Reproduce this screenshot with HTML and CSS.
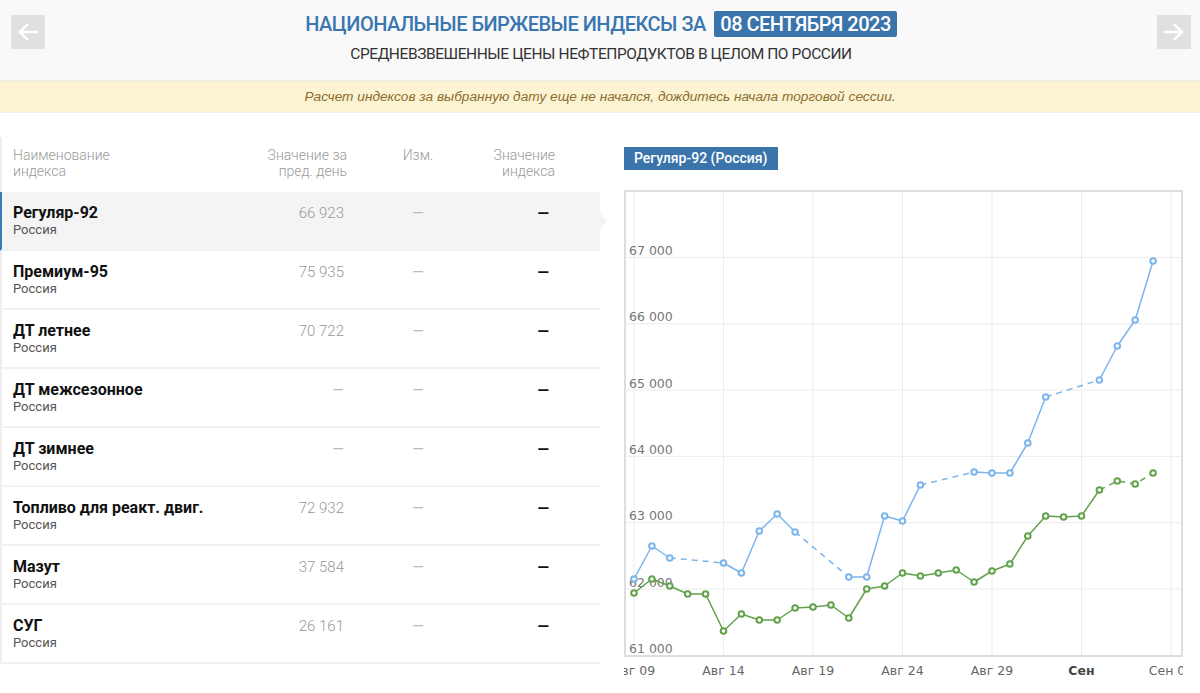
FILE: index.html
```html
<!DOCTYPE html>
<html lang="ru">
<head>
<meta charset="utf-8">
<title>Национальные биржевые индексы</title>
<link rel="stylesheet" href="styles.css">
</head>
<body>
<header class="top">
  <button class="nav" aria-label="Назад">
    <svg width="34" height="34" viewBox="0 0 34 34"><path d="M26 17H9M16 10l-7 7 7 7" fill="none" stroke="#fff" stroke-width="2.4" stroke-linecap="square"/></svg>
  </button>
  <div class="titles">
    <h1 class="title">Национальные биржевые индексы за <span class="date">08 сентября 2023</span></h1>
    <p class="subtitle">Средневзвешенные цены нефтепродуктов в целом по России</p>
  </div>
  <button class="nav" aria-label="Вперёд">
    <svg width="34" height="34" viewBox="0 0 34 34"><path d="M8 17h17M18 10l7 7-7 7" fill="none" stroke="#fff" stroke-width="2.4" stroke-linecap="square"/></svg>
  </button>
</header>
<div class="notice">Расчет индексов за выбранную дату еще не начался, дождитесь начала торговой сессии.</div>
<main class="content">
  <section class="indices">
    <div class="thead">
      <div>Наименование<br>индекса</div>
      <div class="r">Значение за<br>пред. день</div>
      <div class="c">Изм.</div>
      <div class="r">Значение<br>индекса</div>
    </div>
    <div class="row active">
      <div><div class="name">Регуляр-92</div><div class="region">Россия</div></div>
      <div class="prev">66 923</div><div class="chg">—</div><div class="val">—</div>
    </div>
    <div class="row">
      <div><div class="name">Премиум-95</div><div class="region">Россия</div></div>
      <div class="prev">75 935</div><div class="chg">—</div><div class="val">—</div>
    </div>
    <div class="row">
      <div><div class="name">ДТ летнее</div><div class="region">Россия</div></div>
      <div class="prev">70 722</div><div class="chg">—</div><div class="val">—</div>
    </div>
    <div class="row">
      <div><div class="name">ДТ межсезонное</div><div class="region">Россия</div></div>
      <div class="prev dash">—</div><div class="chg">—</div><div class="val">—</div>
    </div>
    <div class="row">
      <div><div class="name">ДТ зимнее</div><div class="region">Россия</div></div>
      <div class="prev dash">—</div><div class="chg">—</div><div class="val">—</div>
    </div>
    <div class="row">
      <div><div class="name">Топливо для реакт. двиг.</div><div class="region">Россия</div></div>
      <div class="prev">72 932</div><div class="chg">—</div><div class="val">—</div>
    </div>
    <div class="row">
      <div><div class="name">Мазут</div><div class="region">Россия</div></div>
      <div class="prev">37 584</div><div class="chg">—</div><div class="val">—</div>
    </div>
    <div class="row">
      <div><div class="name">СУГ</div><div class="region">Россия</div></div>
      <div class="prev">26 161</div><div class="chg">—</div><div class="val">—</div>
    </div>
  </section>
  <section class="chart-panel">
    <div class="series-tag">Регуляр-92 (Россия)</div>
    <svg class="chart" width="559" height="503" viewBox="0 0 559 503">
      <g class="grid">
        <path d="M10 2V465M99.5 2V465M189 2V465M278.5 2V465M368 2V465M457.5 2V465M547 2V465"/>
        <path d="M2 67.5H557M2 133.8H557M2 200.1H557M2 266.4H557M2 332.7H557M2 399H557"/>
      </g>
      <rect class="frame" x="1" y="1" width="557" height="465"/>
      <g class="ylab">
        <text x="5" y="65">67 000</text>
        <text x="5" y="131.3">66 000</text>
        <text x="5" y="197.6">65 000</text>
        <text x="5" y="263.9">64 000</text>
        <text x="5" y="330.2">63 000</text>
        <text x="5" y="396.5">62 000</text>
        <text x="5" y="462.8">61 000</text>
      </g>
      <g class="xlab">
        <text x="10" y="485">Авг 09</text>
        <text x="99.5" y="485">Авг 14</text>
        <text x="189" y="485">Авг 19</text>
        <text x="278.5" y="485">Авг 24</text>
        <text x="368" y="485">Авг 29</text>
        <text x="457.5" y="485" class="month">Сен</text>
        <text x="547" y="485">Сен 08</text>
      </g>
      <g class="s-green">
        <path class="line" d="M10 403L27.9 389L45.8 396L63.7 404L81.6 404L99.5 441L117.4 424L135.3 430L153.2 430L171.1 418L189 417L206.9 415L224.8 428L242.7 399L260.6 396L278.5 383L296.4 386L314.3 383L332.2 380L350.1 392L368 381L385.9 374L403.8 346L421.7 326L439.6 327L457.5 326L475.4 300"/>
        <path class="line dashed" d="M475.4 300L493.3 291L511.2 294L529.1 283"/>
        <circle cx="10" cy="403" r="2.8"/><circle cx="27.9" cy="389" r="2.8"/><circle cx="45.8" cy="396" r="2.8"/><circle cx="63.7" cy="404" r="2.8"/><circle cx="81.6" cy="404" r="2.8"/><circle cx="99.5" cy="441" r="2.8"/><circle cx="117.4" cy="424" r="2.8"/><circle cx="135.3" cy="430" r="2.8"/><circle cx="153.2" cy="430" r="2.8"/><circle cx="171.1" cy="418" r="2.8"/><circle cx="189" cy="417" r="2.8"/><circle cx="206.9" cy="415" r="2.8"/><circle cx="224.8" cy="428" r="2.8"/><circle cx="242.7" cy="399" r="2.8"/><circle cx="260.6" cy="396" r="2.8"/><circle cx="278.5" cy="383" r="2.8"/><circle cx="296.4" cy="386" r="2.8"/><circle cx="314.3" cy="383" r="2.8"/><circle cx="332.2" cy="380" r="2.8"/><circle cx="350.1" cy="392" r="2.8"/><circle cx="368" cy="381" r="2.8"/><circle cx="385.9" cy="374" r="2.8"/><circle cx="403.8" cy="346" r="2.8"/><circle cx="421.7" cy="326" r="2.8"/><circle cx="439.6" cy="327" r="2.8"/><circle cx="457.5" cy="326" r="2.8"/><circle cx="475.4" cy="300" r="2.8"/><circle cx="493.3" cy="291" r="2.8"/><circle cx="511.2" cy="294" r="2.8"/><circle cx="529.1" cy="283" r="2.8"/>
      </g>
      <g class="s-blue">
        <path class="line" d="M10 389L27.9 356L45.8 368M99.5 373L117.4 383L135.3 341L153.2 324L171.1 342M224.8 387L242.7 387L260.6 326L278.5 331L296.4 295M350.1 282L368 283L385.9 283L403.8 253L421.7 207M475.4 190L493.3 156L511.2 130L529.1 71"/>
        <path class="line dashed" d="M45.8 368L99.5 373M171.1 342L224.8 387M296.4 295L350.1 282M421.7 207L475.4 190"/>
        <circle cx="10" cy="389" r="2.8"/><circle cx="27.9" cy="356" r="2.8"/><circle cx="45.8" cy="368" r="2.8"/><circle cx="99.5" cy="373" r="2.8"/><circle cx="117.4" cy="383" r="2.8"/><circle cx="135.3" cy="341" r="2.8"/><circle cx="153.2" cy="324" r="2.8"/><circle cx="171.1" cy="342" r="2.8"/><circle cx="224.8" cy="387" r="2.8"/><circle cx="242.7" cy="387" r="2.8"/><circle cx="260.6" cy="326" r="2.8"/><circle cx="278.5" cy="331" r="2.8"/><circle cx="296.4" cy="295" r="2.8"/><circle cx="350.1" cy="282" r="2.8"/><circle cx="368" cy="283" r="2.8"/><circle cx="385.9" cy="283" r="2.8"/><circle cx="403.8" cy="253" r="2.8"/><circle cx="421.7" cy="207" r="2.8"/><circle cx="475.4" cy="190" r="2.8"/><circle cx="493.3" cy="156" r="2.8"/><circle cx="511.2" cy="130" r="2.8"/><circle cx="529.1" cy="71" r="2.8"/>
      </g>
    </svg>
  </section>
</main>
</body>
</html>
```
FILE: styles.css
```css
* { box-sizing: border-box; }
body {
  margin: 0;
  background: #fff;
  font-family: Roboto, "Noto Sans", sans-serif;
  color: #222;
}
.top {
  display: flex;
  align-items: flex-start;
  height: 81px;
  padding: 0 9px 0 11px;
  background: #f9f9f9;
  border-bottom: 1px solid #ececec;
}
.nav {
  width: 34px;
  height: 34px;
  margin-top: 15px;
  padding: 0;
  border: 0;
  background: #e0e0e0;
  display: flex;
  align-items: center;
  justify-content: center;
}
.nav svg { display: block; }
.titles {
  flex: 1;
  text-align: center;
  padding-top: 11px;
}
.title {
  margin: 0;
  font-size: 20px;
  font-weight: 500;
  line-height: 26px;
  letter-spacing: -0.5px;
  color: #3a76b0;
  text-transform: uppercase;
}
.date {
  display: inline-block;
  margin-left: 4px;
  padding: 0 6px;
  background: #3a74ab;
  color: #fff;
  border-radius: 2px;
}
.subtitle {
  margin: 8px 0 0;
  font-size: 15.5px;
  line-height: 18px;
  letter-spacing: -0.42px;
  color: #333;
  text-transform: uppercase;
}
.notice {
  height: 32px;
  background: #fcf3d3;
  border-bottom: 1px solid #efefef;
  font: italic 13.7px/31px "Liberation Sans", Arial, sans-serif;
  color: #8a6d2e;
  text-align: center;
}
.content {
  display: flex;
  align-items: flex-start;
  padding-top: 24px;
}
.indices { width: 600px; flex: none; }
.thead, .row {
  display: grid;
  grid-template-columns: 234px 100px 142px 66px;
  border-left: 2px solid #eeeeee;
  padding-left: 11px;
}
.thead {
  height: 55px;
  padding-top: 10px;
  font-size: 14px;
  line-height: 16px;
  font-weight: 300;
  color: #999;
}
.r { text-align: right; }
.c { text-align: center; }
.row {
  position: relative;
  height: 59px;
  padding-top: 12px;
  border-bottom: 2px solid #f2f2f2;
}
.row.active {
  background: #f4f4f4;
  border-left-color: #3a7ab8;
}
.row.active::after {
  content: "";
  position: absolute;
  right: -7px;
  top: 50%;
  margin-top: -8px;
  border-left: 7px solid #f4f4f4;
  border-top: 8px solid transparent;
  border-bottom: 8px solid transparent;
}
.name {
  font-size: 16px;
  font-weight: 700;
  line-height: 18px;
  color: #111;
}
.region {
  font-size: 13px;
  line-height: 16px;
  color: #555;
}
.prev {
  text-align: right;
  padding-right: 3px;
  font-size: 15px;
  font-weight: 300;
  line-height: 18px;
  color: #999;
}
.prev.dash { color: #bbb; font-weight: 400; }
.chg {
  text-align: center;
  font-size: 15px;
  line-height: 18px;
  font-weight: 400;
  color: #bbb;
}
.val {
  text-align: right;
  padding-right: 6px;
  font-size: 15px;
  line-height: 18px;
  font-weight: 700;
  color: #111;
}
.chart-panel {
  width: 559px;
  margin-left: 24px;
  padding-top: 10px;
}
.series-tag {
  display: inline-block;
  padding: 0 10px;
  background: #3a74ab;
  color: #fff;
  font-size: 14px;
  font-weight: 500;
  line-height: 23px;
}
.chart {
  display: block;
  margin-top: 20px;
  overflow: hidden;
}
.grid path { stroke: #ececec; stroke-width: 1; fill: none; }
.frame { fill: none; stroke: #dedede; stroke-width: 2; }
.ylab text, .xlab text {
  font-family: "DejaVu Sans", Verdana, sans-serif;
  font-size: 12.5px;
  fill: #777;
}
.xlab text { text-anchor: middle; fill: #666; }
.xlab .month { font-weight: 700; fill: #444; }
.line { fill: none; stroke-width: 1.5; stroke-linejoin: round; }
.dashed { stroke-dasharray: 6 5; }
.s-blue .line { stroke: #7cb5ec; }
.s-green .line { stroke: #62a24c; }
.s-blue circle { fill: #fff; stroke: #7cb5ec; stroke-width: 2; }
.s-green circle { fill: #fff; stroke: #62a24c; stroke-width: 2; }
```
